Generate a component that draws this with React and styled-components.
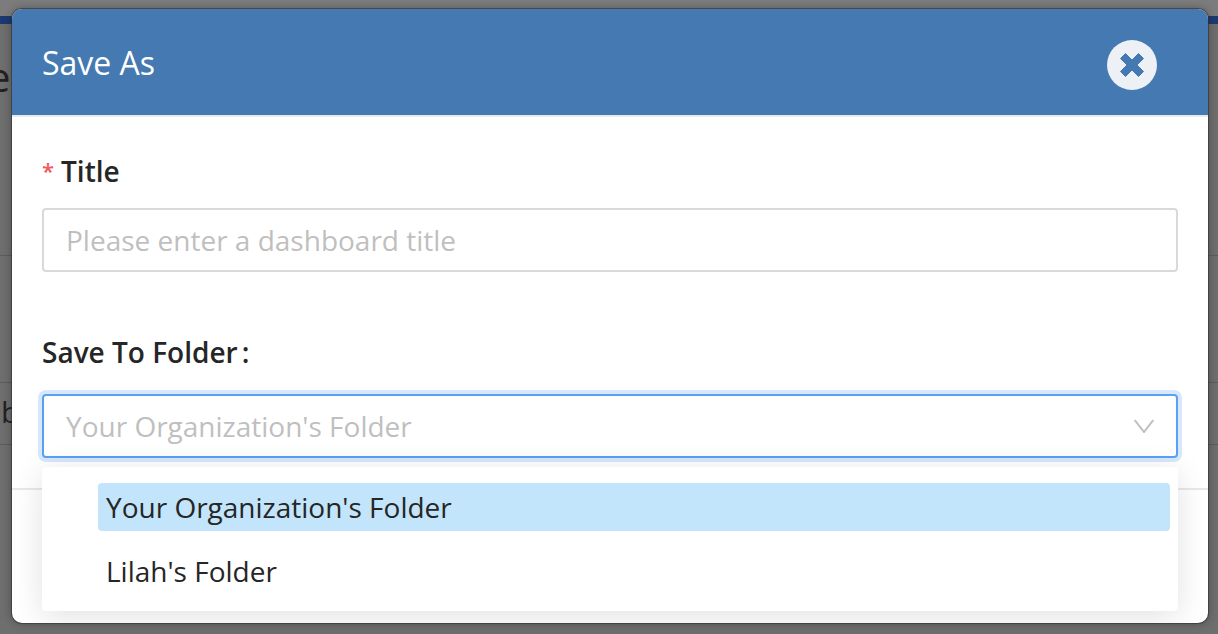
import React from 'react';
import styled, { createGlobalStyle } from 'styled-components';

const GlobalStyle = createGlobalStyle`
  html, body {
    margin: 0;
    height: 100%;
    overflow: hidden;
    background: #6f6f6f;
    font-family: "Open Sans", "Liberation Sans", sans-serif;
  }
`;

const Backdrop = styled.div`
  position: relative;
  width: 1218px;
  height: 634px;
  box-sizing: border-box;
  padding: 9px 10px 0 12px;
  background: linear-gradient(#7c7c7c 0 16px, #1c3a72 16px 24px, #6e6e6e 24px);
`;

const PageLine = styled.div`
  position: absolute;
  left: 0;
  right: 0;
  top: ${(p) => p.$top}px;
  height: 1px;
  background: #5c5c5c;
`;

const PageLetter = styled.span`
  position: absolute;
  left: ${(p) => p.$left}px;
  top: ${(p) => p.$top}px;
  font-size: ${(p) => p.$size}px;
  line-height: 40px;
  color: #222;
`;

const Modal = styled.div`
  position: relative;
  width: 1196px;
  height: 614px;
  display: flex;
  flex-direction: column;
  border-radius: 10px;
  overflow: hidden;
  background: #fff;
  box-shadow: 0 0 0 1px rgba(50, 50, 50, 0.6), 0 0 10px rgba(0, 0, 0, 0.35);
`;

const Header = styled.header`
  height: 106px;
  flex: none;
  padding: 0 50px 0 30px;
  display: flex;
  align-items: center;
  justify-content: space-between;
  background: #4579b2;
  border-bottom: 2px solid #e6e9ee;
`;

const Title = styled.h2`
  margin: 0;
  font-size: 32px;
  font-weight: 400;
  color: #fff;
`;

const CloseButton = styled.button`
  width: 50px;
  height: 50px;
  margin: 5px 1px 0 0;
  padding: 0;
  border: 0;
  border-radius: 50%;
  background: #edf1f6;
  display: flex;
  align-items: center;
  justify-content: center;
`;

const Body = styled.div`
  padding: 34px 30px 0;
  display: flex;
  flex-direction: column;
`;

const Label = styled.label`
  font-size: 28px;
  line-height: 40px;
  font-weight: 600;
  color: #262626;
  margin-bottom: ${(p) => p.$gap}px;
`;

const Required = styled.span`
  display: inline-block;
  width: 19px;
  color: #f5585a;
  font-size: 22px;
  line-height: 1;
  font-weight: 600;
  vertical-align: 3px;
`;

const Colon = styled.span`
  margin-left: 4px;
`;

const Field = styled.div`
  height: 64px;
  box-sizing: border-box;
  padding: 0 22px;
  display: flex;
  align-items: center;
  justify-content: space-between;
  border-radius: 4px;
  border: 2px solid ${(p) => (p.$focused ? '#59a1f5' : '#d9d9d9')};
  box-shadow: ${(p) => (p.$focused ? '0 0 0 4px #d8e7fb' : 'none')};
  margin-bottom: ${(p) => p.$gap}px;
  font-size: 28px;
  color: #bfbfbf;
`;

const Footer = styled.div`
  position: absolute;
  left: 0;
  right: 0;
  top: 479px;
  border-top: 2px solid #e8e8e8;
`;

const Menu = styled.ul`
  position: absolute;
  left: 30px;
  top: 458px;
  width: 1136px;
  height: 144px;
  box-sizing: border-box;
  margin: 0;
  padding: 16px 8px 0 56px;
  list-style: none;
  background: #fff;
  border-radius: 4px;
  box-shadow: 0 6px 32px rgba(0, 0, 0, 0.12);
`;

const Option = styled.li`
  height: 48px;
  margin-bottom: 16px;
  padding-left: 8px;
  display: flex;
  align-items: center;
  border-radius: 4px;
  font-size: 28px;
  color: #262626;
  background: ${(p) => (p.$selected ? '#c2e5fb' : 'transparent')};
`;

export default function App() {
  return (
    <Backdrop>
      <GlobalStyle />
      <PageLine $top={255} />
      <PageLine $top={382} />
      <PageLine $top={444} />
      <PageLetter $left={-12} $top={57} $size={40}>e</PageLetter>
      <PageLetter $left={1} $top={392} $size={30}>b</PageLetter>
      <Modal>
        <Header>
          <Title>Save As</Title>
          <CloseButton aria-label="Close">
            <svg width="28" height="28" viewBox="0 0 28 28">
              <path d="M2.5 7.5l5-5L14 9l6.5-6.5 5 5L19 14l6.5 6.5-5 5L14 19l-6.5 6.5-5-5L9 14z" fill="#4579b2" stroke="#4579b2" strokeWidth="1" strokeLinejoin="round" />
            </svg>
          </CloseButton>
        </Header>
        <Body>
          <Label $gap={17}><Required>*</Required>Title</Label>
          <Field $gap={60}>Please enter a dashboard title</Field>
          <Label $gap={22}>Save To Folder<Colon>:</Colon></Label>
          <Field $focused>
            Your Organization's Folder
            <svg width="20" height="14" viewBox="0 0 20 14" fill="none">
              <path d="M.7 1L10 13 19.3 1" stroke="#bfbfbf" strokeWidth="2" />
            </svg>
          </Field>
        </Body>
        <Footer />
        <Menu>
          <Option $selected>Your Organization's Folder</Option>
          <Option>Lilah's Folder</Option>
        </Menu>
      </Modal>
    </Backdrop>
  );
}
